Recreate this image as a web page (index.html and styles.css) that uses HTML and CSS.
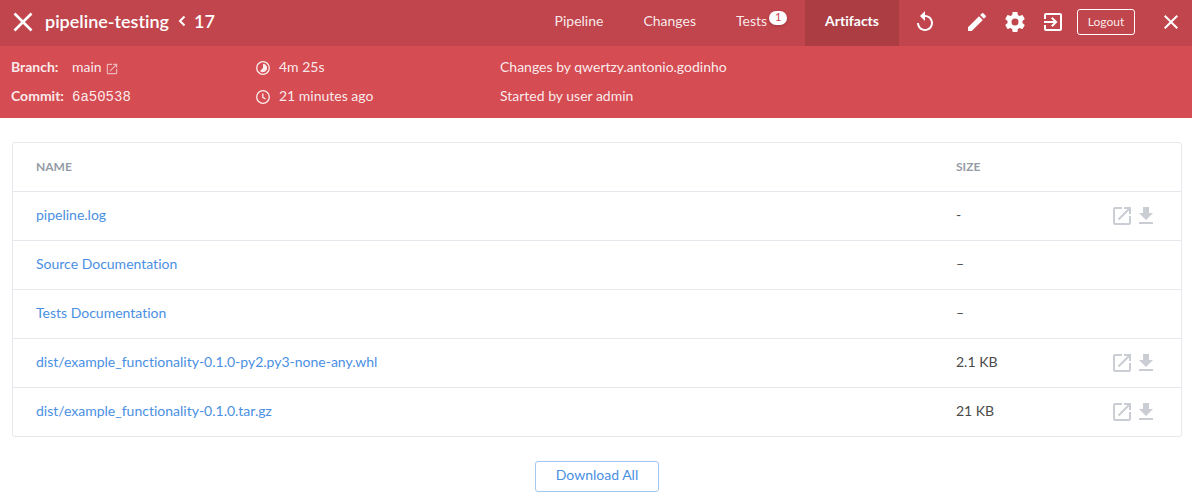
FILE: index.html
```html
<!DOCTYPE html>
<html lang="en">
<head>
<meta charset="utf-8">
<title>pipeline-testing / 17 / Artifacts</title>
<link rel="stylesheet" href="styles.css">
</head>
<body>
<svg class="defs" aria-hidden="true">
  <symbol id="open" viewBox="0 0 24 24"><path d="M19 19H5V5h7V3H5a2 2 0 0 0-2 2v14a2 2 0 0 0 2 2h14c1.1 0 2-.9 2-2v-7h-2v7zM14 3v2h3.590l-9.830 9.830 1.410 1.410L19 6.410V10h2V3h-7z"/></symbol>
  <symbol id="download" viewBox="0 0 24 24"><path d="M19 9h-4V3H9v6H5l7 7 7-7zM5 18v2h14v-2H5z"/></symbol>
</svg>
<header class="topbar">
  <svg class="status" viewBox="0 0 20 20"><path d="M1.500 1.500l17 17M18.500 1.500l-17 17"/></svg>
  <h1 class="title"><span class="name">pipeline-testing</span><svg class="chevron" viewBox="0 0 8 12"><path d="M6.500 1.500L2 6l4.500 4.500"/></svg><span>17</span></h1>
  <nav class="tabs">
    <a class="tab">Pipeline</a>
    <a class="tab">Changes</a>
    <a class="tab tests">Tests<span class="badge">1</span></a>
    <a class="tab active">Artifacts</a>
  </nav>
  <div class="tools">
    <svg class="icon replay" viewBox="0 0 24 24"><path d="M12 5V1L7 6l5 5V7c3.310 0 6 2.690 6 6s-2.690 6-6 6-6-2.690-6-6H4c0 4.420 3.580 8 8 8s8-3.580 8-8-3.580-8-8-8z"/></svg>
    <svg class="icon" viewBox="0 0 24 24"><path d="M3 17.250V21h3.750L17.810 9.940l-3.750-3.750L3 17.250zM20.710 7.040a1 1 0 0 0 0-1.410l-2.340-2.340a1 1 0 0 0-1.410 0l-1.830 1.830 3.750 3.750 1.830-1.830z"/></svg>
    <svg class="icon" viewBox="0 0 24 24"><path d="M19.430 12.980c.04-.32.070-.64.070-.98s-.03-.66-.07-.98l2.110-1.650c.19-.15.240-.42.120-.64l-2-3.460c-.12-.22-.39-.3-.61-.22l-2.490 1c-.52-.4-1.080-.73-1.690-.98l-.38-2.650C14.460 2.180 14.250 2 14 2h-4c-.25 0-.46.180-.49.420l-.38 2.650c-.61.250-1.170.590-1.690.980l-2.490-1c-.23-.09-.49 0-.61.220l-2 3.460c-.13.220-.07.490.12.640l2.110 1.650c-.04.320-.07.650-.07.980s.03.660.07.980l-2.110 1.650c-.19.150-.24.420-.12.640l2 3.460c.12.220.39.300.61.220l2.490-1c.52.400 1.080.730 1.690.980l.38 2.650c.03.240.24.420.49.420h4c.25 0 .46-.18.490-.42l.38-2.650c.61-.25 1.170-.59 1.690-.98l2.490 1c.23.090.49 0 .61-.22l2-3.460c.12-.22.070-.49-.12-.64l-2.110-1.650zM12 15.500a3.500 3.500 0 1 1 0-7 3.500 3.500 0 0 1 0 7z"/></svg>
    <svg class="icon" viewBox="0 0 24 24"><path d="M10.090 15.590L11.500 17l5-5-5-5-1.410 1.410L12.670 11H3v2h9.670l-2.580 2.590zM19 3H5a2 2 0 0 0-2 2v4h2V5h14v14H5v-4H3v4a2 2 0 0 0 2 2h14c1.100 0 2-.9 2-2V5c0-1.100-.9-2-2-2z"/></svg>
    <button class="logout">Logout</button>
    <svg class="icon" viewBox="0 0 24 24"><path d="M19 6.410L17.590 5 12 10.590 6.410 5 5 6.410 10.590 12 5 17.590 6.410 19 12 13.410 17.590 19 19 17.590 13.410 12z"/></svg>
  </div>
</header>
<section class="details">
  <div class="col refs">
    <div class="line"><b>Branch:</b><span>main</span><svg class="mini"><use href="#open"/></svg></div>
    <div class="line"><b>Commit:</b><span class="hash">6a50538</span></div>
  </div>
  <div class="col times">
    <div class="line"><svg class="clock" viewBox="0 0 16 16"><circle class="ring" cx="8" cy="8" r="6.300"/><path class="pie" d="M8 3.800A4.200 4.200 0 1 1 5 11L8 8z"/></svg><span>4m 25s</span></div>
    <div class="line"><svg class="clock" viewBox="0 0 16 16"><circle class="ring" cx="8" cy="8" r="6.300"/><path class="hands" d="M7.800 4.500v3.800l2.800 1.700"/></svg><span>21 minutes ago</span></div>
  </div>
  <div class="col">
    <div class="line">Changes by qwertzy.antonio.godinho</div>
    <div class="line">Started by user admin</div>
  </div>
</section>
<main class="content">
  <div class="table">
    <div class="row head"><span>NAME</span><span>SIZE</span></div>
    <div class="row"><a>pipeline.log</a><span>-</span><span class="actions"><svg class="icon"><use href="#open"/></svg><svg class="icon"><use href="#download"/></svg></span></div>
    <div class="row"><a>Source Documentation</a><span>–</span></div>
    <div class="row"><a>Tests Documentation</a><span>–</span></div>
    <div class="row"><a>dist/example_functionality-0.1.0-py2.py3-none-any.whl</a><span>2.1 KB</span><span class="actions"><svg class="icon"><use href="#open"/></svg><svg class="icon"><use href="#download"/></svg></span></div>
    <div class="row"><a>dist/example_functionality-0.1.0.tar.gz</a><span>21 KB</span><span class="actions"><svg class="icon"><use href="#open"/></svg><svg class="icon"><use href="#download"/></svg></span></div>
  </div>
  <button class="download-all">Download All</button>
</main>
</body>
</html>
```

FILE: styles.css
```css
* { box-sizing: border-box; }
body {
  margin: 0;
  background: #fff;
  color: #4a4a4a;
  font: 14px/20px Lato, "Liberation Sans", sans-serif;
  font-variant-ligatures: none;
  overflow: hidden;
}
svg { display: block; flex: none; }
.defs { display: none; }
.icon { width: 24px; height: 24px; fill: currentColor; }

.topbar {
  display: flex;
  height: 46px;
  padding-left: 13px;
  background: #c1454c;
  color: #fff;
}
.status {
  width: 20px;
  height: 20px;
  margin-top: 12px;
  fill: none;
  stroke: #fff;
  stroke-width: 2.6;
}
.title {
  display: flex;
  margin: 0 0 0 12px;
  font-size: 18px;
  font-weight: 600;
  line-height: 42px;
}
.name { width: 126px; }
.chevron {
  width: 8px;
  height: 12px;
  margin: 15px 8px 0 7px;
  fill: none;
  stroke: #fff;
  stroke-width: 2;
}
.tabs { display: flex; margin-left: auto; }
.tab {
  display: flex;
  padding: 0 20px;
  line-height: 42px;
  color: rgba(255, 255, 255, .9);
}
.tests { padding-right: 18px; }
.badge {
  width: 18px;
  height: 14px;
  margin: 11px 0 0 2px;
  border-radius: 7px;
  background: #fff;
  color: #c1454c;
  font-size: 11px;
  line-height: 12px;
  text-align: center;
  box-shadow: 0 1px 3px rgba(0, 0, 0, .2);
}
.active { background: #ab3d43; color: #fff; font-weight: 700; }
.tools {
  display: flex;
  width: 293px;
  padding: 10px 0 0 14px;
  gap: 14px;
}
.replay { margin-right: 14px; }
.logout {
  width: 58px;
  height: 26px;
  margin: -1px 10px 0 -2px;
  padding: 0;
  border: 1px solid #fff;
  border-radius: 3px;
  background: none;
  color: rgba(255, 255, 255, .9);
  font: 12px/22px Lato, sans-serif;
}

.details {
  display: grid;
  grid-template-columns: 244px 245px 1fr;
  height: 72px;
  padding: 7px 11px;
  background: #d54c53;
  color: rgba(255, 255, 255, .9);
}
.line { display: flex; height: 29px; line-height: 27px; }
.line b { width: 61px; }
.hash { font-family: "Liberation Mono", monospace; line-height: 31px; }
.mini { width: 14px; height: 14px; margin: 9px 0 0 3px; fill: rgba(255, 255, 255, .6); }
.clock { width: 16px; height: 16px; margin: 7px 8px 0 0; }
.ring, .hands { fill: none; stroke: currentColor; stroke-width: 1.3; }
.pie { fill: currentColor; }

.content {
  display: flex;
  flex-direction: column;
  align-items: center;
  padding: 24px 10px 0 12px;
}
.table {
  width: 100%;
  border: 1px solid #e6e8ed;
  border-radius: 3px;
}
.row {
  display: grid;
  grid-template-columns: 920px 1fr auto;
  height: 49px;
  padding: 0 23px;
  line-height: 45px;
}
.row + .row { border-top: 1px solid #e6e8ed; }
.row a { color: #4a90e2; }
.head { height: 48px; color: #949ba5; font-size: 12px; font-weight: 700; line-height: 48px; }
.actions { display: flex; padding-top: 12px; color: #cacdd3; }
.download-all {
  width: 124px;
  height: 31px;
  margin-top: 24px;
  padding: 0 0 3px;
  border: 1px solid #a4c7f0;
  border-radius: 3px;
  background: #fff;
  color: #4a90e2;
  font: 14px/26px Lato, sans-serif;
  font-variant-ligatures: none;
}
```
